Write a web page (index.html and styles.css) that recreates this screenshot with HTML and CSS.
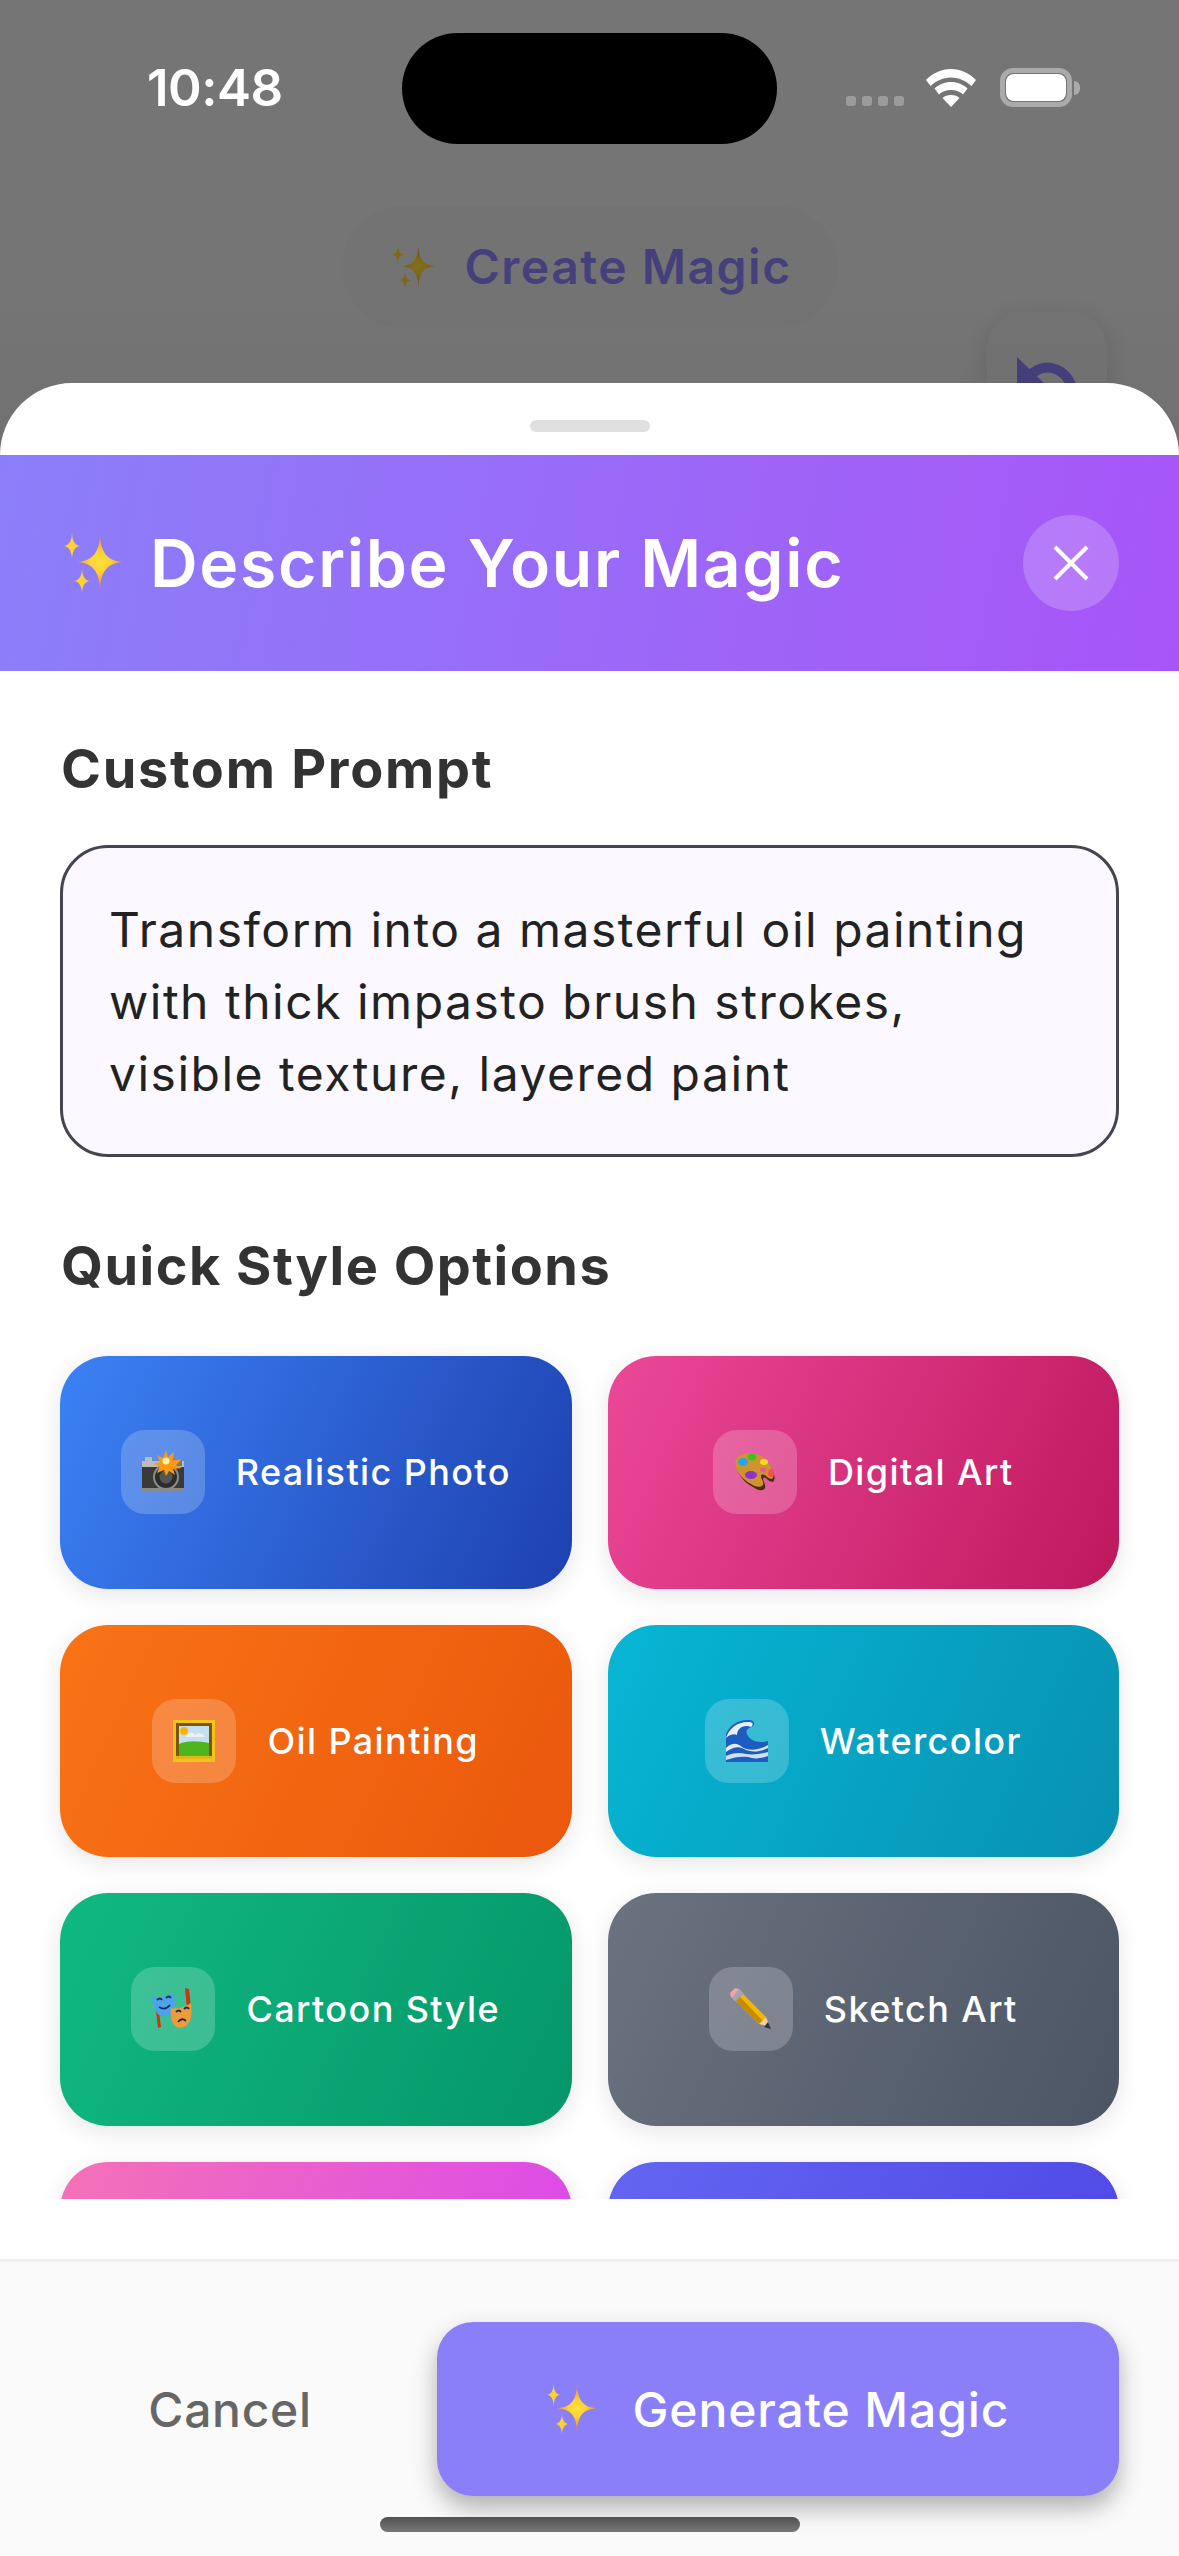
FILE: index.html
```html
<!DOCTYPE html>
<html lang="en">
<head>
<meta charset="utf-8">
<title>Describe Your Magic</title>
<link rel="stylesheet" href="styles.css">
</head>
<body>
<svg class="defs" width="0" height="0" aria-hidden="true">
  <defs>
    <radialGradient id="sp" gradientUnits="userSpaceOnUse" cx="36" cy="29" r="23">
      <stop offset="0" stop-color="#ffe23f"/><stop offset="0.45" stop-color="#ffd22f"/><stop offset="1" stop-color="#f9931e"/>
    </radialGradient>
    <symbol id="sparkles" viewBox="0 0 60 60">
      <path fill="url(#sp)" d="M36 1C36.500 19 43 28 59 29C43 30 36.500 39 36 57C35.500 39 29 30 13 29C29 28 35.500 19 36 1Z"/>
      <path fill="#ffd32f" d="M8 -.5C8.300 8 11 12.500 16 13C11 13.500 8.300 18 8 26.500C7.700 18 5 13.500 0 13C5 12.500 7.700 8 8 -.5Z"/>
      <path fill="#ffd32f" d="M18 36C18.300 43 21 47.500 26 48C21 48.500 18.300 53 18 60C17.700 53 15 48.500 10 48C15 47.500 17.700 43 18 36Z"/>
    </symbol>
  </defs>
</svg>

<div class="screen">
  <div class="page">
    <div class="status">
      <span class="time">10:48</span>
      <div class="status-icons">
        <div class="signal"><i></i><i></i><i></i><i></i></div>
        <svg class="wifi" width="50" height="38" viewBox="0 0 50 38"><path fill="#fff" d="M25 0C15 0 7 4 0 11l4.500 6C10 12 17 8.500 25 8.500S40 12 45.500 17l4.500-6C43 4 35 0 25 0Z"/><path fill="#fff" d="M25 13c-6.500 0-12 2.500-16.500 6.500l4.500 6c3-3 7-4.500 12-4.500s9 1.500 12 4.500l4.500-6C37 15.500 31.500 13 25 13Z"/><path fill="#fff" d="M25 26c-3.500 0-6.500 1-8.500 3L25 38l8.500-9c-2-2-5-3-8.500-3Z"/></svg>
        <div class="battery"><div class="battery-level"></div></div>
        <div class="battery-nub"></div>
      </div>
    </div>
    <div class="create-pill">
      <svg class="spark-top"><use href="#sparkles"/></svg>
      <span class="create-text">Create Magic</span>
    </div>
    <div class="undo">
      <svg width="72" height="72" viewBox="0 0 72 72"><path fill="#8b7ff9" d="M0 0l28 27-28 3Z"/><path fill="none" stroke="#8b7ff9" stroke-width="10" d="M6 27C16 12 27 9 35 11c13 3 22 14 22 36"/></svg>
    </div>
  </div>
  <div class="scrim"></div>
  <div class="island"></div>

  <section class="sheet">
    <div class="handle-row"><div class="handle"></div></div>
    <header class="head">
      <div class="head-title">
        <svg class="spark-head"><use href="#sparkles"/></svg>
        <h1>Describe Your Magic</h1>
      </div>
      <div class="close">
        <svg width="36" height="36" viewBox="0 0 36 36"><path d="M2 2l32 32M34 2L2 34" stroke="#fff" stroke-width="4" fill="none"/></svg>
      </div>
    </header>
    <div class="scroll">
      <h2 class="label">Custom Prompt</h2>
      <div class="prompt">Transform into a masterful oil painting with thick impasto brush strokes, visible texture, layered paint</div>
      <h2 class="label label-quick">Quick Style Options</h2>
      <div class="grid">
        <div class="card c-blue">
          <div class="ico"><svg class="emoji" viewBox="0 0 42 42">
            <rect x="3" y="6" width="7" height="5" fill="#bdbdbd"/><rect x="0" y="10" width="42" height="7" fill="#bcbcbc"/><rect x="0" y="16" width="42" height="24" fill="#3a3a3a"/><rect x="0" y="37" width="42" height="3" fill="#8a8a8a"/>
            <rect x="30" y="8" width="10" height="7" fill="#777"/><circle cx="24" cy="26" r="12" fill="#2c2c2c" stroke="#8c8c8c" stroke-width="2"/><circle cx="24" cy="26" r="6.500" fill="#555"/>
            <path fill="#fb9a0f" d="M24-1l2 7 6-5-1 8 9-1-6 6 6 3-9 1 2 6-6-4-3 5-2-6-7 3 3-7-7-2 7-2-3-7 6 3Z"/><circle cx="24" cy="10" r="3.500" fill="#fff1a8"/>
          </svg></div>
          <span>Realistic Photo</span>
        </div>
        <div class="card c-pink">
          <div class="ico"><svg class="emoji" viewBox="0 0 42 42">
            <path fill="#4a2c10" d="M3 9C9 1 24 2 32 10c6 6 10 14 8 20-2 2-5 0-7-2-2-2-4-2-4 0 0 3 3 4 2 9-2 4-8 2-12-1C10 32 0 20 3 9Z"/>
            <path fill="#d1932e" d="M2 8C8 0 23 0 31 8c6 6 10 14 8 19-2 2-5 0-7-2-2-2-5-2-5 0 0 4 3 4 2 9-2 3-8 2-12-1C9 29-1 19 2 8Z"/>
            <ellipse cx="9" cy="11" rx="5" ry="4" fill="#22a7e8"/><ellipse cx="18" cy="6" rx="4" ry="3.500" fill="#35c327"/><ellipse cx="30" cy="11" rx="4" ry="3" fill="#f6da22"/><ellipse cx="17" cy="24" rx="6" ry="4" fill="#8c33c9"/><ellipse cx="37" cy="22" rx="3" ry="4" fill="#f0534d"/><ellipse cx="29" cy="19" rx="3" ry="2.500" fill="#e25a9c"/>
          </svg></div>
          <span>Digital Art</span>
        </div>
        <div class="card c-orange">
          <div class="ico"><svg class="emoji" viewBox="0 0 42 42">
            <rect width="42" height="42" fill="#f0c419"/><rect x="3" y="3" width="36" height="36" fill="#7a5510"/>
            <rect x="6" y="6" width="30" height="30" fill="#c4e0f0"/><path fill="#4fb51f" d="M6 24c8-4 20-3 30-1v13H6Z"/><circle cx="11" cy="11" r="4" fill="#f7b500"/><path fill="#eee" d="M13 17c2-5 7-6 9-2 3-3 9-2 10 2Z"/><rect x="3" y="36" width="36" height="3" fill="#e2b617"/>
          </svg></div>
          <span>Oil Painting</span>
        </div>
        <div class="card c-cyan">
          <div class="ico"><svg class="emoji" viewBox="0 0 42 42">
            <path fill="#1d5cc0" d="M0 42V14C4 5 12 0 22 0c5 0 8 3 5 6-3 2-8 3-6 8 2 6 11 10 21 7v21Z"/>
            <path fill="#e8f0f6" d="M0 18C3 8 12 1 24 2c4 1 3 3 1 5-8-3-14 2-14 8-3-2-8 0-11 3Z"/>
            <path fill="#dfeaf3" d="M0 28c6-6 12-5 16-1 6 4 16 4 26-2v3c-10 5-18 4-24 1-6-3-11-2-18 3Z"/>
            <path fill="#cfe0ee" d="M0 36c6-3 13-4 20-2 8 1 14 0 22-2v4c-8 3-14 3-20 1-6-1-14 0-22 3Z"/>
          </svg></div>
          <span>Watercolor</span>
        </div>
        <div class="card c-green">
          <div class="ico"><svg class="emoji" viewBox="0 0 42 42">
            <path fill="#c9360f" d="M3 15l3 25 3-1-3-24ZM33 0l4 1 2 19-4 1Z"/>
            <path fill="#4da3ea" d="M0 8c6 2 14 1 21-3 3 6 2 16-1 20-3 4-9 4-13 2C3 24 1 16 0 8Z"/>
            <path fill="#f09a38" d="M19 20c6 1 12 0 20-5 1 8 1 17-4 22-3 3-9 4-12 1-4-4-5-12-4-18Z"/>
            <path fill="none" stroke="#12305a" stroke-width="1.800" d="M5 12q3-3 5 0M14 10q3-3 5 0M7 19q6 4 11-2M24 24q3-3 5 0M32 21q3-3 5 0M26 34q4-5 8-1"/>
          </svg></div>
          <span>Cartoon Style</span>
        </div>
        <div class="card c-gray">
          <div class="ico"><svg class="emoji" viewBox="0 0 42 42">
            <path fill="#f1a2a2" d="M0 5l5-5 4 1 4 4-8 8-4-4Z"/><path fill="#90a4c0" d="M9 1l6 6-8 8-5-5Z" opacity=".8"/>
            <path fill="#f2b705" d="M13 6l23 23-7 7L6 13Z"/><path fill="#c98a00" d="M10 9L32.500 32.500 29 36 6 13Z"/>
            <path fill="#f3cf96" d="M36 29l4 10-11-3Z"/><path fill="#2d3340" d="M38 34l3 7-7-2Z"/>
          </svg></div>
          <span>Sketch Art</span>
        </div>
        <div class="card c-rose"></div>
        <div class="card c-indigo"></div>
      </div>
    </div>
    <footer class="foot">
      <div class="cancel">Cancel</div>
      <div class="generate">
        <svg class="spark-btn"><use href="#sparkles"/></svg>
        <span>Generate Magic</span>
      </div>
    </footer>
  </section>
  <div class="home"></div>
</div>
</body>
</html>
```

FILE: styles.css
```css
* { box-sizing: border-box; }
html, body { margin: 0; padding: 0; }
body { font-family: Inter, "Liberation Sans", sans-serif; background: #fff; }
.defs { position: absolute; }
.screen { position: relative; width: 1179px; height: 2556px; overflow: hidden; }

.page { height: 500px; background: #eaeaea; display: flex; flex-direction: column; }
.status { height: 206px; flex: none; display: flex; justify-content: space-between; align-items: flex-start; position: relative; z-index: 3; padding: 58px 99px 0 147px; }
.time { color: #fff; font-size: 51px; font-weight: 600; line-height: 60px; letter-spacing: -.5px; }
.status-icons { display: flex; align-items: flex-start; padding-top: 10px; }
.signal { display: flex; gap: 6px; margin: 28px 22px 0 0; }
.signal i { width: 10px; height: 10px; border-radius: 3px; background: #9b9b9b; display: block; }
.wifi { margin-right: 24px; margin-top: 1px; }
.battery { width: 72px; height: 39px; border: 5px solid #aaa; border-radius: 13px; padding: 1px; }
.battery-level { width: 100%; height: 100%; background: #fff; border-radius: 8px; }
.battery-nub { width: 6px; height: 14px; margin: 13px 0 0 2px; background: #aaa; border-radius: 0 6px 6px 0; }

.create-pill { align-self: center; width: 496px; height: 122px; flex: none; border-radius: 61px; background: #e6e6e6; display: flex; align-items: center; gap: 29px; padding-left: 50px; }
.spark-top { width: 44px; height: 44px; }
.create-text { font-size: 48px; font-weight: 600; line-height: 58px; color: #8b7ff9; letter-spacing: 1.5px; }
.undo { align-self: flex-end; flex: none; margin: -16px 72px 0 0; width: 120px; height: 120px; border-radius: 36px; background: #e6e6e6; box-shadow: 0 6px 24px rgba(0,0,0,.12); padding: 45px 0 0 30px; }

.scrim { position: absolute; left: 0; top: 0; width: 100%; height: 500px; background: linear-gradient(rgba(0,0,0,.5) 60%, rgba(0,0,0,.525)); }
.island { position: absolute; left: 402px; top: 33px; width: 375px; height: 111px; border-radius: 56px; background: #000; }

.sheet { position: absolute; left: 0; top: 383px; width: 1179px; height: 2173px; background: #fff; border-radius: 72px 72px 0 0; display: flex; flex-direction: column; overflow: hidden; }
.handle-row { height: 72px; flex: none; display: flex; justify-content: center; padding-top: 37px; }
.handle { width: 120px; height: 12px; border-radius: 6px; background: #e0e0e0; }
.head { height: 216px; flex: none; background: linear-gradient(100.4deg, #8b7ff9, #a855f7); display: flex; align-items: center; justify-content: space-between; padding: 0 60px 0 64px; }
.head-title { display: flex; align-items: center; gap: 26px; }
.spark-head { width: 60px; height: 60px; }
.head h1 { margin: 0; color: #fff; font-size: 66px; font-weight: 600; line-height: 80px; letter-spacing: 1.7px; }
.close { width: 96px; height: 96px; border-radius: 50%; background: rgba(255,255,255,.2); display: flex; align-items: center; justify-content: center; }

.scroll { height: 1528px; flex: none; overflow: hidden; padding: 65px 60px 0; margin-bottom: 60px; position: relative; }
.label { margin: 0; padding-left: 1px; color: #333; font-size: 54px; font-weight: 700; line-height: 66px; letter-spacing: 1.7px; }
.label-quick { margin-top: 76px; letter-spacing: 1.5px; }
.prompt { margin-top: 43px; height: 312px; border: 3px solid #45454f; border-radius: 48px; background: #fbf8ff; padding: 46px 46px 0; color: #222; font-size: 48px; line-height: 72px; letter-spacing: 1.5px; }
.grid { display: grid; grid-template-columns: 1fr 1fr; gap: 36px; margin-top: 57px; }
.card { height: 232.5px; border-radius: 48px; display: flex; align-items: center; justify-content: center; gap: 31px; color: #fff; font-size: 36px; font-weight: 500; letter-spacing: 1.4px; box-shadow: 0 6px 24px rgba(0,0,0,.1); }
.ico { width: 84px; height: 84px; border-radius: 24px; background: rgba(255,255,255,.2); display: flex; align-items: center; justify-content: center; flex: none; }
.emoji { width: 42px; height: 42px; overflow: visible; }
.c-blue { background: linear-gradient(114.4deg, #3b82f6, #1e40af); }
.c-pink { background: linear-gradient(114.4deg, #ec4899, #be185d); }
.c-orange { background: linear-gradient(114.4deg, #f97316, #ea580c); }
.c-cyan { background: linear-gradient(114.4deg, #06b6d4, #0891b2); }
.c-green { background: linear-gradient(114.4deg, #10b981, #059669); }
.c-gray { background: linear-gradient(114.4deg, #6b7280, #4b5563); }
.c-rose { background: linear-gradient(114.4deg, #f472b6, #d946ef); }
.c-indigo { background: linear-gradient(114.4deg, #6366f1, #4f46e5); }

.foot { flex: 1; background: #fafafa; border-top: 3px solid #f0f0f0; display: flex; align-items: flex-start; gap: 37px; padding: 60px 60px 0; }
.cancel { width: 340px; height: 174px; flex: none; display: flex; align-items: center; justify-content: center; color: #666; font-size: 48px; font-weight: 500; letter-spacing: .7px; }
.generate { flex: 1; height: 174px; border-radius: 36px; background: #8b7ff9; box-shadow: 0 12px 24px rgba(0,0,0,.3); display: flex; align-items: center; justify-content: center; gap: 36px; color: #fff; font-size: 48px; font-weight: 500; letter-spacing: .9px; }
.spark-btn { width: 50px; height: 50px; }

.home { position: absolute; left: 380px; top: 2517px; width: 420px; height: 15px; border-radius: 8px; background: linear-gradient(#515151, #787878); }
```
